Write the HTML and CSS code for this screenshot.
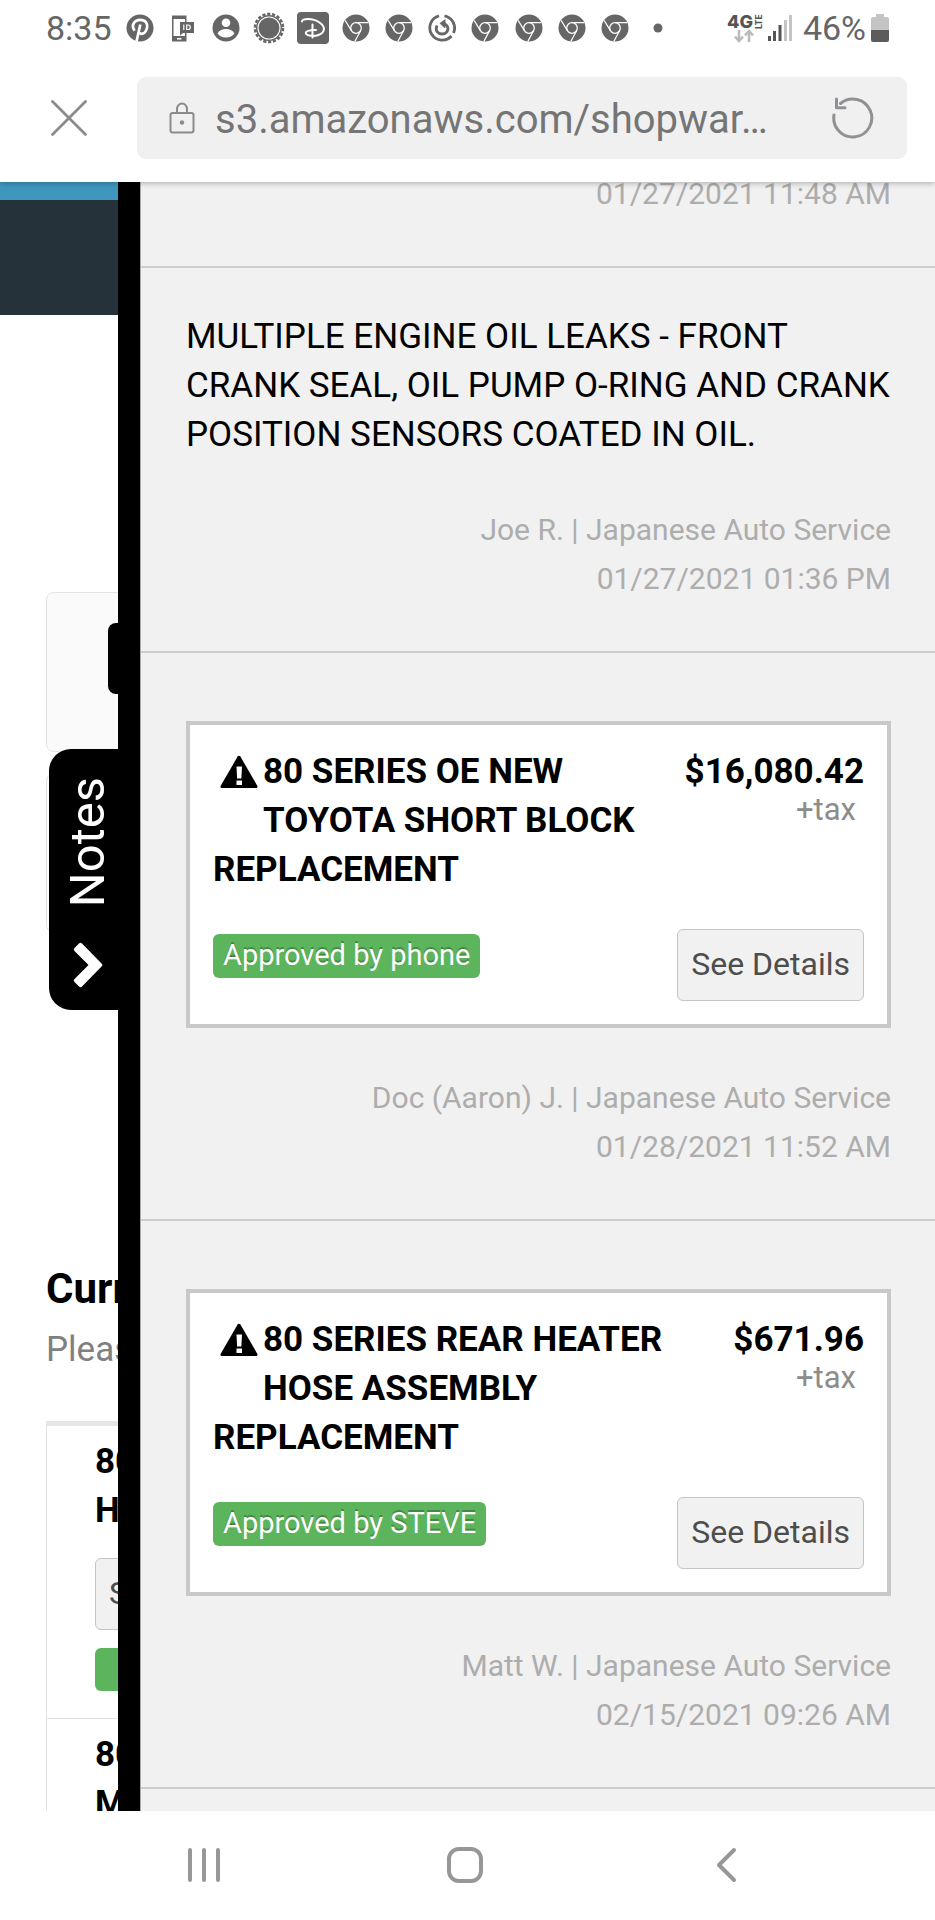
FILE: index.html
```html
<!DOCTYPE html>
<html lang="en">
<head>
<meta charset="utf-8">
<meta name="viewport" content="width=device-width, initial-scale=1">
<title>Notes</title>
<link rel="stylesheet" href="styles.css">
</head>
<body>
<svg class="sprite" width="0" height="0" aria-hidden="true">
  <symbol id="chrome" viewBox="0 0 28 28">
    <circle cx="14" cy="14" r="13.5" fill="#666"/>
    <g fill="none" stroke="#fff" stroke-width="1.3">
      <circle cx="14" cy="14" r="5.3"/>
      <path d="M14 8.700H26M9.300 16.500 3.200 6.500M18.700 16.500 12.800 27.500"/>
    </g>
  </symbol>
  <symbol id="warning" viewBox="0 0 38 34">
    <path d="M17.600 1.600Q19 0 20.400 1.600L37.400 31Q38 33 36 33H2Q0 33 .6 31Z" fill="#000"/>
    <path d="M16.500 11.500h5.500l-.6 12h-4.300zM16.500 25.500h5.500v4.500h-5.500z" fill="#fff"/>
  </symbol>
</svg>
<div class="app">
  <header class="browser">
    <div class="status">
      <span class="clock">8:35</span>
      <div class="tray">
        <svg width="28" height="28" viewBox="0 0 28 28"><circle cx="14" cy="14" r="13.500" fill="#666"/><path d="M10.500 27.500 14.300 10.500M8.700 16.600C4.500 11.500 8.500 5.800 14.300 5.800c5.200 0 7.600 3.600 6.800 7.800-.8 4.700-4 6.800-6.500 6-1.400-.4-1.900-1.300-2.100-2" fill="none" stroke="#fff" stroke-width="2.700"/></svg>
        <svg width="24" height="28" viewBox="0 0 24 28"><path d="M1 1.500h14.500V9h-1.500V5H2.500v17H14v-4h1.500v9.500H1z" fill="#666"/><path d="M6 24.800h4.500" stroke="#fff" stroke-width="1.500"/><path d="M9 8h14v11H12l-3 2.500z" fill="#666"/><path d="M12.800 10.500v5.500M15.700 11v4.500h1.400q2.200 0 2.200-2.200t-2.200-2.300z" stroke="#fff" stroke-width="1.200" fill="none"/></svg>
        <svg width="28" height="28" viewBox="0 0 28 28"><circle cx="14" cy="14" r="13.500" fill="#666"/><circle cx="14" cy="8.800" r="4.300" fill="#fff"/><path d="M5.500 19.500q2.500-4.500 8.500-4.500t8.500 4.500q-3 4-8.500 4t-8.500-4z" fill="#fff"/></svg>
        <svg width="32" height="32" viewBox="0 0 32 32"><circle cx="16" cy="16" r="14" fill="none" stroke="#666" stroke-width="2.600" stroke-dasharray="3.200 1.700"/><circle cx="16" cy="16" r="13" fill="#666"/><circle cx="16" cy="16" r="11" fill="none" stroke="#fff" stroke-width="1.100"/></svg>
        <svg width="32" height="32" viewBox="0 0 32 32"><rect width="32" height="32" rx="4" fill="#666"/><path d="M5 9.500C5 6.500 15 5.500 22.500 10.500c6.500 4.500 5.500 10-1 12.500-5 1.800-11 .8-12.500-1.200-1.500-2.500 4-4 10-3.800M15.500 12.500v13" fill="none" stroke="#fff" stroke-width="2" stroke-linecap="round"/></svg>
        <svg width="28" height="28"><use href="#chrome"/></svg>
        <svg width="28" height="28"><use href="#chrome"/></svg>
        <svg width="28" height="28" viewBox="0 0 28 28" fill="none" stroke="#666"><path d="M11 1.800A12.400 12.400 0 1 0 23.500 22M16.500 1.800A12.400 12.400 0 0 1 25.500 19" stroke-width="2.800"/><path d="M9 11.500c-2.500 5.500 1.500 8.500 5 8.500 5 0 7.500-5 4.800-8.500-1-1.300-2.300-1.900-4-2" stroke-width="2.800"/><path d="M17.500 5v9h-1L11.500 9.300z" fill="#666" stroke="none"/></svg>
        <svg width="28" height="28"><use href="#chrome"/></svg>
        <svg width="28" height="28"><use href="#chrome"/></svg>
        <svg width="28" height="28"><use href="#chrome"/></svg>
        <svg width="28" height="28"><use href="#chrome"/></svg>
        <svg width="10" height="10"><circle cx="5" cy="5" r="4.500" fill="#666"/></svg>
      </div>
      <div class="signals">
        <svg class="network" width="36" height="32" viewBox="0 0 36 32"><text class="net" x="0" y="16">4G</text><text class="lte" transform="translate(35 17) rotate(-90)">LTE</text><path d="M12 18v11M8 24.500l4 4.500 4-4.500M22 30V19M18 23.500l4-4.500 4 4.500" fill="none" stroke="#bbb" stroke-width="2.600"/></svg>
        <svg width="24" height="28" viewBox="0 0 24 28"><path d="M1.500 27v-5M6.500 27V17M12 27V11" stroke="#555" stroke-width="3"/><path d="M17.500 27V6M22.500 27V1" stroke="#c4c4c4" stroke-width="3"/></svg>
        <span class="percent">46%</span>
        <svg width="18" height="28" viewBox="0 0 18 28"><path d="M5 0h8v3h3q2 0 2 2v11H0V5q0-2 2-2h3z" fill="#c4c4c4"/><path d="M0 16h18v10q0 2-2 2H2q-2 0-2-2z" fill="#5c5c5c"/></svg>
      </div>
    </div>
    <div class="toolbar">
      <button class="icon-button" aria-label="Close"><svg width="36" height="36" viewBox="0 0 36 36"><path d="M1.500 1.500l33 33M34.500 1.500l-33 33" stroke="#8b8b8b" stroke-width="2.800" stroke-linecap="round"/></svg></button>
      <div class="address">
        <svg width="26" height="32" viewBox="0 0 26 32" fill="none" stroke="#8b8b8b" stroke-width="2"><rect x="1.500" y="11" width="23" height="19.500" rx="2"/><path d="M8 11V7a5 5.500 0 0 1 10 0v4"/><circle cx="13" cy="20.500" r="2.200" fill="#8b8b8b" stroke="none"/></svg>
        <input class="url" type="text" aria-label="Address" value="s3.amazonaws.com/shopwar…">
        <button class="icon-button" aria-label="Reload"><svg width="44" height="44" viewBox="0 0 44 44" fill="none" stroke="#919195" stroke-width="3"><path d="M3 19A19 19 0 1 0 9.500 7.500" stroke-linecap="round"/><path d="M5.500 3v8.800H14" stroke-linecap="round" stroke-linejoin="round"/></svg></button>
      </div>
    </div>
  </header>

  <main class="viewport">
    <div class="page">
      <div class="accent"></div>
      <div class="masthead"></div>
      <div class="content">
        <div class="panel"><div class="panel-action"></div></div>
        <div class="panel"></div>
        <h2 class="heading">Current</h2>
        <p class="hint">Please</p>
        <div class="jobs">
          <div class="job">
            <p class="job-name">80<br>HOSE</p>
            <button class="button">See</button>
            <div class="swatch"></div>
          </div>
          <div class="job">
            <p class="job-name">80<br>MAIN</p>
          </div>
        </div>
      </div>
    </div>

    <aside class="drawer">
      <button class="tab"><span class="tab-label">Notes</span><svg width="30" height="46" viewBox="0 0 30 46"><path d="M6 1.500Q7.500 0 9 1.500L29 22q1 1 0 2L9 44.500q-1.500 1.500-3 0l-4.500-4.500q-1.500-1.500 0-3L15.500 23 1.500 9Q0 7.500 1.500 6z" fill="#fff"/></svg></button>
      <div class="notes">
        <section class="note">
          <p class="meta">01/27/2021 11:48 AM</p>
        </section>
        <section class="note">
          <p class="message">MULTIPLE ENGINE OIL LEAKS - FRONT CRANK SEAL, OIL PUMP O-RING AND CRANK POSITION SENSORS COATED IN OIL.</p>
          <p class="meta">Joe R. | Japanese Auto Service<br>01/27/2021 01:36 PM</p>
        </section>
        <section class="note note-card">
          <article class="card">
            <div class="card-top">
              <h3 class="title"><svg class="warning" width="38" height="34"><use href="#warning"/></svg>80 SERIES OE NEW TOYOTA SHORT BLOCK REPLACEMENT</h3>
              <div class="cost"><strong class="price">$16,080.42</strong><span class="tax">+tax</span></div>
            </div>
            <div class="card-bottom"><span class="badge">Approved by phone</span><button class="button">See Details</button></div>
          </article>
          <p class="meta">Doc (Aaron) J. | Japanese Auto Service<br>01/28/2021 11:52 AM</p>
        </section>
        <section class="note note-card">
          <article class="card">
            <div class="card-top">
              <h3 class="title"><svg class="warning" width="38" height="34"><use href="#warning"/></svg>80 SERIES REAR HEATER HOSE ASSEMBLY REPLACEMENT</h3>
              <div class="cost"><strong class="price">$671.96</strong><span class="tax">+tax</span></div>
            </div>
            <div class="card-bottom"><span class="badge">Approved by STEVE</span><button class="button">See Details</button></div>
          </article>
          <p class="meta">Matt W. | Japanese Auto Service<br>02/15/2021 09:26 AM</p>
        </section>
      </div>
    </aside>
  </main>

  <nav class="system-nav">
    <button class="icon-button" aria-label="Recents"><svg width="34" height="36" viewBox="0 0 34 36"><path d="M3 3v30M17 3v30M31 3v30" stroke="#979797" stroke-width="4" stroke-linecap="round"/></svg></button>
    <button class="icon-button" aria-label="Home"><svg width="38" height="38" viewBox="0 0 38 38"><rect x="3" y="3" width="32" height="32" rx="10" fill="none" stroke="#979797" stroke-width="4"/></svg></button>
    <button class="icon-button" aria-label="Back"><svg width="22" height="36" viewBox="0 0 22 36"><path d="M19 3 4 18l15 15" fill="none" stroke="#979797" stroke-width="4" stroke-linecap="round" stroke-linejoin="round"/></svg></button>
  </nav>
</div>
</body>
</html>
```

FILE: styles.css
```css
* { box-sizing: border-box; }

body {
  margin: 0;
  background: #fff;
  color: #000;
  font-family: Roboto, "Liberation Sans", sans-serif;
}

p, h2, h3 { margin: 0; }

button {
  padding: 0;
  border: 0;
  background: none;
  font: inherit;
}

svg { display: block; flex: none; }

.sprite { position: absolute; }

.app {
  display: flex;
  flex-direction: column;
  height: 100vh;
}

.browser {
  position: relative;
  z-index: 1;
  flex: none;
  padding-bottom: 23px;
  background: #fff;
  box-shadow: 0 1px 6px rgba(0, 0, 0, 0.3);
}

.status {
  display: flex;
  align-items: center;
  height: 56px;
  padding: 0 46px;
  color: #666;
  font-size: 34px;
}

.clock { width: 72px; }

.tray {
  display: grid;
  flex: 0 1 562px;
  grid-template-columns: repeat(13, 1fr);
  place-items: center;
}

.signals {
  display: flex;
  align-items: center;
  gap: 5px;
  margin-left: auto;
}

.network { overflow: visible; }

.net {
  fill: #555;
  font-family: Inter, Roboto, sans-serif;
  font-size: 18px;
  font-weight: 800;
}

.lte {
  fill: #555;
  font-size: 9px;
  font-weight: 700;
}

.percent { padding-left: 6px; }

.toolbar {
  display: flex;
  align-items: center;
  padding: 21px 28px 0 0;
}

.toolbar > .icon-button { width: 137px; }

.icon-button {
  display: grid;
  place-items: center;
}

.address {
  display: flex;
  flex: 1;
  align-items: center;
  height: 82px;
  padding: 0 32px;
  border-radius: 9px;
  background: #f0f0f0;
}

.url {
  flex: 1;
  min-width: 0;
  margin-left: 20px;
  padding: 2px 0 0;
  border: 0;
  background: none;
  color: #757575;
  font: 40px Roboto, "Liberation Sans", sans-serif;
}

.viewport {
  position: relative;
  flex: 1;
  min-height: 0;
  overflow: hidden;
}

.accent { height: 18px; background: #3f97bf; }

.masthead { height: 115px; background: #26323a; }

.content { padding: 277px 46px 0; }

.panel {
  height: 160px;
  margin-bottom: 21px;
  padding: 30px 0 0 61px;
  border: 1px solid #e3e3e3;
  border-radius: 8px;
  background: #fafafa;
}

.panel + .panel { background: #fff; }

.panel-action {
  width: 160px;
  height: 71px;
  border-radius: 8px;
  background: #000;
}

.heading {
  padding-top: 310px;
  font-size: 42px;
  line-height: 49px;
}

.hint {
  padding: 12px 0 47px;
  color: #808080;
  font-size: 35px;
  line-height: 49px;
}

.jobs {
  border: 1px solid #e3e3e3;
  border-top: 5px solid #e6e6e6;
}

.job {
  padding: 11px 48px 27px;
  border-bottom: 1px solid #e3e3e3;
}

.job-name {
  font-size: 35px;
  font-weight: 700;
  line-height: 49px;
}

.job .button { margin: 23px 0 18px; }

.swatch {
  width: 240px;
  height: 43px;
  border-radius: 6px;
  background: #5cb55c;
}

.drawer {
  position: absolute;
  inset: 0 0 0 118px;
  border-left: 22px solid #000;
  background: #f1f1f1;
}

.tab {
  position: absolute;
  top: 567px;
  right: 100%;
  display: flex;
  flex-direction: column;
  align-items: center;
  justify-content: space-between;
  width: 91px;
  height: 261px;
  padding: 28px 13px 22px 0;
  border-radius: 22px 0 0 22px;
  background: #000;
  color: #fff;
}

.tab-label {
  font-size: 49px;
  line-height: 56px;
  writing-mode: vertical-rl;
  transform: rotate(180deg);
}

.notes {
  height: 100%;
  overflow: hidden;
  border-left: 1px solid #aaa;
}

.note {
  padding: 44px 44px 48px 45px;
  border-bottom: 2px solid #ccc;
}

.note:first-child {
  margin-top: -13px;
  padding-top: 0;
}

.note-card { padding-top: 68px; }

.message {
  margin-bottom: 46px;
  font-size: 35px;
  line-height: 49px;
}

.meta {
  color: #adadad;
  font-size: 30px;
  line-height: 49px;
  text-align: right;
}

.card {
  margin-bottom: 45px;
  padding: 22px 23px 23px;
  border: 4px solid #c8c8c8;
  background: #fff;
}

.card-top {
  display: flex;
  justify-content: space-between;
}

.title {
  flex: 0 1 460px;
  font-size: 35px;
  font-weight: 700;
  line-height: 49px;
}

.warning {
  float: left;
  box-sizing: content-box;
  padding: 8px 5px 12px 7px;
}

.cost {
  display: flex;
  flex-direction: column;
  align-items: flex-end;
}

.price {
  font-size: 35px;
  line-height: 49px;
}

.tax {
  padding-right: 8px;
  color: #8c8c8c;
  font-size: 31px;
  line-height: 28px;
}

.card-bottom {
  display: flex;
  align-items: flex-start;
  justify-content: space-between;
  padding-top: 35px;
}

.badge {
  margin-top: 5px;
  padding: 0 10px 2px;
  border-radius: 6px;
  background: #5cb55c;
  color: #fff;
  font-size: 29px;
  line-height: 42px;
  text-shadow: 0 -2px 0 rgba(0, 0, 0, 0.25);
}

.button {
  height: 72px;
  padding: 0 13px 2px;
  border: 1px solid #c4c4c4;
  border-radius: 6px;
  background: #f1f1f1;
  color: #4d4d4d;
  font-size: 32px;
}

.system-nav {
  display: grid;
  flex: none;
  grid-template-columns: repeat(3, 1fr);
  align-items: center;
  height: 109px;
  padding: 0 78px 2px 73px;
  background: #fff;
}
```
